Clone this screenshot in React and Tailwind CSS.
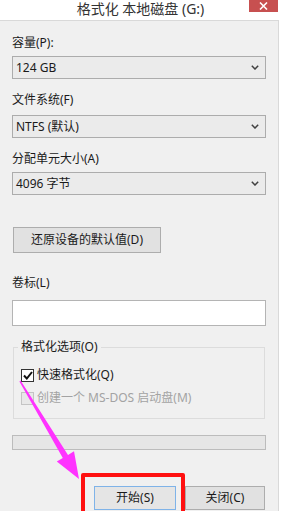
export default function App() {
  return (
    <div
      className="relative h-[511px] w-[281px] overflow-hidden bg-white text-[12px] leading-[16px] text-[#1a1a1a]"
      style={{ fontFamily: '"Noto Sans", "Noto Sans CJK SC", sans-serif' }}
    >
      {/* title bar */}
      <div className="grid h-[20px] w-[281px] grid-cols-[1fr_auto_1fr] items-start">
        <div />
        <div className="mt-[1px] text-[14px] leading-[15px] text-[#333333]">格式化 本地磁盘 (G:)</div>
        <div className="flex justify-end pr-[3px]">
          <div className="flex h-[12px] w-[29px] items-center justify-center bg-[#c75050]">
            <svg width="9" height="8" viewBox="0 0 9 8">
              <path d="M1 0.5 L8 7.5 M8 0.5 L1 7.5" stroke="#ffffff" strokeWidth="1.6" />
            </svg>
          </div>
        </div>
      </div>

      {/* dialog body */}
      <div className="h-[491px] w-[279px] border-r border-t border-[#d9d9d9] bg-[#f0f0f0] px-[12px] pt-[14px]">
        <div>容量(P):</div>
        <Select value="124 GB" className="mt-[5px]" />

        <div className="mt-[13px]">文件系统(F)</div>
        <Select value="NTFS (默认)" className="mt-[7px]" />

        <div className="mt-[13px]">分配单元大小(A)</div>
        <Select value="4096 字节" className="mt-[5px]" />

        <button className="ml-[1px] mt-[32px] flex h-[26px] w-[148px] items-center justify-center border border-[#adadad] bg-[#e1e1e1]">
          还原设备的默认值(D)
        </button>

        <div className="mt-[22px]">卷标(L)</div>
        <div className="mt-[9px] h-[26px] w-full border border-[#b4b4b4] bg-white" />

        <fieldset className="mx-[1px] mt-[13px] border border-[#dcdcdc] pb-[12px] pl-[4px] pr-[4px]">
          <legend className="px-[3px]">格式化选项(O)</legend>
          <div className="ml-[3px] mt-[12px] flex h-[16px] items-center gap-[3px]">
            <div className="flex h-[13px] w-[13px] items-center justify-center border border-[#333333] bg-white">
              <svg width="10" height="9" viewBox="0 0 10 9">
                <path d="M1 4.5 L3.8 7.5 L9 1" fill="none" stroke="#111111" strokeWidth="2" />
              </svg>
            </div>
            <span>快速格式化(Q)</span>
          </div>
          <div className="ml-[3px] mt-[7px] flex h-[16px] items-center gap-[3px] text-[#a3a3a3]">
            <div className="h-[13px] w-[13px] border border-[#c4c4c4] bg-[#e8e8e8]" />
            <span>创建一个 MS-DOS 启动盘(M)</span>
          </div>
        </fieldset>

        <div className="mt-[16px] h-[15px] w-full border border-[#bcbcbc] bg-[#e6e6e6]" />

        <div className="mt-[36px] flex gap-[9px] pl-[82px]">
          <button className="flex h-[24px] w-[82px] items-center justify-center border border-[#7fb3e8] bg-[#e5e5e5]">
            开始(S)
          </button>
          <button className="flex h-[24px] w-[80px] items-center justify-center border border-[#adadad] bg-[#e1e1e1]">
            关闭(C)
          </button>
        </div>
      </div>

      {/* annotation: red highlight frame */}
      <div className="pointer-events-none absolute left-[81px] top-[473px] h-[50px] w-[104px] rounded-[2px] border-4 border-[#ff1010]" />

      {/* annotation: magenta arrow */}
      <svg className="pointer-events-none absolute left-0 top-0" width="281" height="511" viewBox="0 0 281 511">
        <polygon
          points="19.4,381.4 62.8,458 56.8,461.6 79,479 74,451.2 68,454.9 20.6,380.6"
          fill="#ff33ff"
        />
      </svg>
    </div>
  );
}

function Select({ value, className = "" }) {
  return (
    <div className={`flex h-[23px] w-full items-center justify-between border border-[#acacac] bg-[#ebebeb] pl-[3px] pr-[6px] ${className}`}>
      <span>{value}</span>
      <svg width="8" height="5" viewBox="0 0 8 5">
        <path d="M0.8 0.8 L4 4 L7.2 0.8" fill="none" stroke="#404040" strokeWidth="1.5" />
      </svg>
    </div>
  );
}
